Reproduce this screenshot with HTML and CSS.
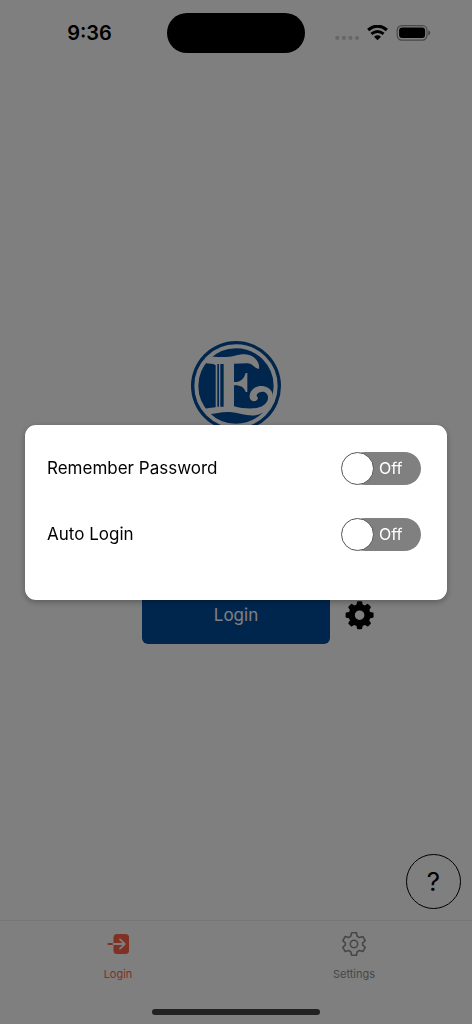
FILE: index.html
```html
<!DOCTYPE html>
<html lang="en">
<head>
  <meta charset="UTF-8">
  <meta name="viewport" content="width=device-width, initial-scale=1">
  <title>Login</title>
  <link rel="stylesheet" href="styles.css">
</head>
<body>

  <header class="status-bar">
    <div class="time">9:36</div>
    <div class="island"></div>
    <div class="indicators">
      <svg class="signal" viewBox="0 0 24 5" width="24" height="5" aria-hidden="true">
        <circle cx="2.3" cy="1.9" r="2.1"/><circle cx="8.9" cy="1.9" r="2.1"/><circle cx="15.5" cy="1.9" r="2.1"/><circle cx="22" cy="1.9" r="2"/>
      </svg>
      <svg class="wifi" viewBox="0 0 21 16" width="21" height="16" aria-hidden="true">
        <path d="M1.1 4.9Q10.5-2.6 19.9 4.9" fill="none" stroke="#000" stroke-width="3.2"/>
        <path d="M4.4 8.9Q10.5 3.9 16.6 8.9" fill="none" stroke="#000" stroke-width="2.9"/>
        <path d="M7 11.7Q10.5 8.9 14 11.7L10.5 15.3Z"/>
      </svg>
      <svg class="battery" viewBox="0 0 35 16" width="35" height="16" aria-hidden="true">
        <rect x="1.2" y=".7" width="29.8" height="14.4" rx="4.6" fill="none" stroke="#909090" stroke-width="1.2"/>
        <rect x="3.1" y="2.5" width="26" height="10.6" rx="3"/>
        <path d="M32.4 5.2Q34.2 5.8 34.2 7.8T32.4 10.4Z" fill="#808080"/>
      </svg>
    </div>
  </header>

  <main class="login-screen">
    <svg class="logo" viewBox="33 33 270 270" role="img" aria-label="E logo">
      <circle class="blue" cx="168" cy="168" r="135"/>
      <circle cx="168" cy="168" r="119" fill="none" stroke="#fff" stroke-width="12"/>
      <path class="white" d="M76 83C90 77 113 82 139 81C164 80 174 72 195 73C220 74 241 94 237 117C223 116 219 99 200 100L162 101V156C180 157 192 148 197 129H202V186H197C192 171 180 165 162 166V229C185 235 209 238 230 234C253 230 265 216 264 201C263 188 250 182 239 187C229 191 227 199 234 203C233 213 221 217 213 210C204 201 210 181 224 173C243 162 270 170 277 188C284 218 264 242 238 253C209 263 181 248 150 246C119 244 97 256 75 250L74 238C87 231 98 235 107 231V106C101 100 91 103 79 100Z"/>
      <path class="blue" d="M112 102H117V230H112ZM121 102H131V230H121Z"/>
    </svg>
    <div class="login-row">
      <button class="login-button" type="button">Login</button>
      <button class="gear-button" type="button" aria-label="Login options">
        <svg viewBox="0 0 30 30" width="30" height="30" aria-hidden="true">
          <circle cx="14.6" cy="15.2" r="7.9" fill="none" stroke="#000" stroke-width="6.2"/>
          <path d="M13 2.2H16.2L17 6H12.2ZM13 28.2H16.2L17 24.4H12.2ZM1.6 13.6V16.8L5.4 17.6V12.8ZM27.6 13.6V16.8L23.8 17.6V12.8ZM4.3 7.2L6.6 4.9 9.8 7 6.4 10.4ZM24.9 7.2L22.6 4.9 19.4 7 22.8 10.4ZM4.3 23.2L6.6 25.5 9.8 23.4 6.4 20ZM24.9 23.2L22.6 25.5 19.4 23.4 22.8 20Z" stroke="#000" stroke-width="2" stroke-linejoin="round"/>
        </svg>
      </button>
    </div>
    <button class="help-button" type="button" aria-label="Help">?</button>
  </main>

  <nav class="tab-bar">
    <a class="tab active" href="#login">
      <svg viewBox="0 0 26 26" width="26" height="26" aria-hidden="true">
        <rect x="8.5" y="3" width="15.5" height="20" rx="3.5" fill="currentColor"/>
        <path d="M3.4 13H8.5" fill="none" stroke="currentColor" stroke-width="1.8" stroke-linecap="round"/>
        <path d="M8.5 13h11M15 8.4l4.8 4.6-4.8 4.6" fill="none" stroke="#fff" stroke-width="1.8" stroke-linecap="round" stroke-linejoin="round"/>
      </svg>
      <span>Login</span>
    </a>
    <a class="tab" href="#settings">
      <svg viewBox="0 0 26 26" width="26" height="26" fill="none" stroke="currentColor" stroke-width="1.6" stroke-linejoin="round" aria-hidden="true">
        <path d="M10.6 1.8h4.8l.8 3.5 2.2 1.3 3.4-1.1 2.4 4.2-2.6 2.4v1.8l2.6 2.4-2.4 4.2-3.4-1.1-2.2 1.3-.8 3.5h-4.8l-.8-3.5-2.2-1.3-3.4 1.1-2.4-4.2 2.6-2.4v-1.8L1.8 9.7l2.4-4.2 3.4 1.1 2.2-1.3Z"/>
        <circle cx="13" cy="13" r="3.7"/>
      </svg>
      <span>Settings</span>
    </a>
  </nav>

  <div class="overlay">
    <div class="dialog" role="dialog" aria-label="Login options">
      <div class="option">
        <label for="remember">Remember Password</label>
        <div class="switch">
          <input type="checkbox" role="switch" id="remember">
          <span class="switch-text">Off</span>
        </div>
      </div>
      <div class="option">
        <label for="auto">Auto Login</label>
        <div class="switch">
          <input type="checkbox" role="switch" id="auto">
          <span class="switch-text">Off</span>
        </div>
      </div>
    </div>
    <div class="home-indicator"></div>
  </div>

  <script>
    document.querySelectorAll('.switch input').forEach(input => {
      input.addEventListener('change', () => {
        input.nextElementSibling.textContent = input.checked ? 'On' : 'Off';
      });
    });
  </script>

</body>
</html>
```
FILE: styles.css
```css
*,
*::before,
*::after {
  box-sizing: border-box;
}

body {
  display: flex;
  flex-direction: column;
  min-height: 100vh;
  margin: 0;
  background-color: #fff;
  color: #000;
  font-family: Inter, "Liberation Sans", sans-serif;
}

button {
  padding: 0;
  border: none;
  background: none;
  color: inherit;
  font: inherit;
  cursor: pointer;
}

svg {
  display: block;
}

/* status bar */
.status-bar {
  display: grid;
  grid-template-columns: 1fr 138px 1fr;
  align-items: center;
  height: 66px;
}

.time {
  padding-left: 12px;
  font-size: 20px;
  font-weight: 600;
  text-align: center;
}

.island {
  height: 40px;
  border-radius: 20px;
  background-color: #000;
}

.indicators {
  display: flex;
  justify-content: center;
  align-items: center;
  gap: 8px;
  padding-right: 12px;
}

.signal {
  align-self: flex-end;
  fill: #cfcfcf;
}

/* login screen */
.login-screen {
  position: relative;
  flex: 1;
  display: flex;
  flex-direction: column;
  justify-content: center;
  align-items: center;
  gap: 156px;
  padding-bottom: 2px;
}

.logo {
  width: 90px;
  height: 90px;
}

.logo .blue {
  fill: #004c9c;
}

.logo .white {
  fill: #fff;
}

.login-row {
  display: grid;
  grid-template-columns: 1fr 40% 1fr;
  align-items: center;
  width: 100%;
}

.login-button {
  grid-column: 2;
  height: 57px;
  border-radius: 6px;
  background-color: #004c9c;
  color: #fff;
  font-size: 17px;
}

.gear-button {
  justify-self: start;
  margin-left: 15px;
}

.help-button {
  position: absolute;
  right: 11px;
  bottom: 11px;
  width: 55px;
  height: 55px;
  border: 1px solid #000;
  border-radius: 50%;
  font-size: 26px;
}

/* bottom tabs */
.tab-bar {
  display: flex;
  height: 104px;
  border-top: 1px solid #ececec;
}

.tab {
  flex: 1;
  display: flex;
  flex-direction: column;
  align-items: center;
  gap: 9px;
  padding-top: 10px;
  color: #8e8e8f;
  font-size: 11px;
  line-height: 16px;
  text-decoration: none;
}

.tab.active {
  color: #ff6347;
}

/* options dialog */
.overlay {
  position: fixed;
  inset: 0;
  display: flex;
  justify-content: center;
  align-items: center;
  background-color: rgba(0, 0, 0, 0.5);
}

.dialog {
  display: flex;
  flex-direction: column;
  gap: 33px;
  width: calc(100% - 50px);
  padding: 27px 26px 49px 22px;
  border-radius: 11px;
  background-color: #fff;
  box-shadow: 0 2px 6px rgba(0, 0, 0, 0.3);
}

.option {
  display: flex;
  justify-content: space-between;
  align-items: center;
  font-size: 17px;
}

.switch {
  position: relative;
  width: 80px;
  height: 33px;
}

.switch input {
  appearance: none;
  display: block;
  width: 100%;
  height: 100%;
  margin: 0;
  cursor: pointer;
}

.switch input::before {
  content: "";
  position: absolute;
  inset: 0 0 0 8px;
  border-radius: 17px;
  background-color: #808080;
}

.switch input::after {
  content: "";
  position: absolute;
  top: 0;
  left: 0;
  width: 33px;
  height: 33px;
  border: 1px solid #555;
  border-radius: 50%;
  background-color: #fff;
}

.switch input:checked::before {
  inset: 0 8px 0 0;
  background-color: #004c9c;
}

.switch input:checked::after {
  left: 47px;
}

.switch-text {
  position: absolute;
  inset: 0 19px 0 38px;
  color: #fff;
  font-size: 16px;
  line-height: 33px;
  pointer-events: none;
}

.switch input:checked + .switch-text {
  left: 14px;
}

.home-indicator {
  position: absolute;
  bottom: 9px;
  left: 50%;
  width: 168px;
  height: 6px;
  margin-left: -84px;
  border-radius: 3px;
  background-color: #222;
}
```
